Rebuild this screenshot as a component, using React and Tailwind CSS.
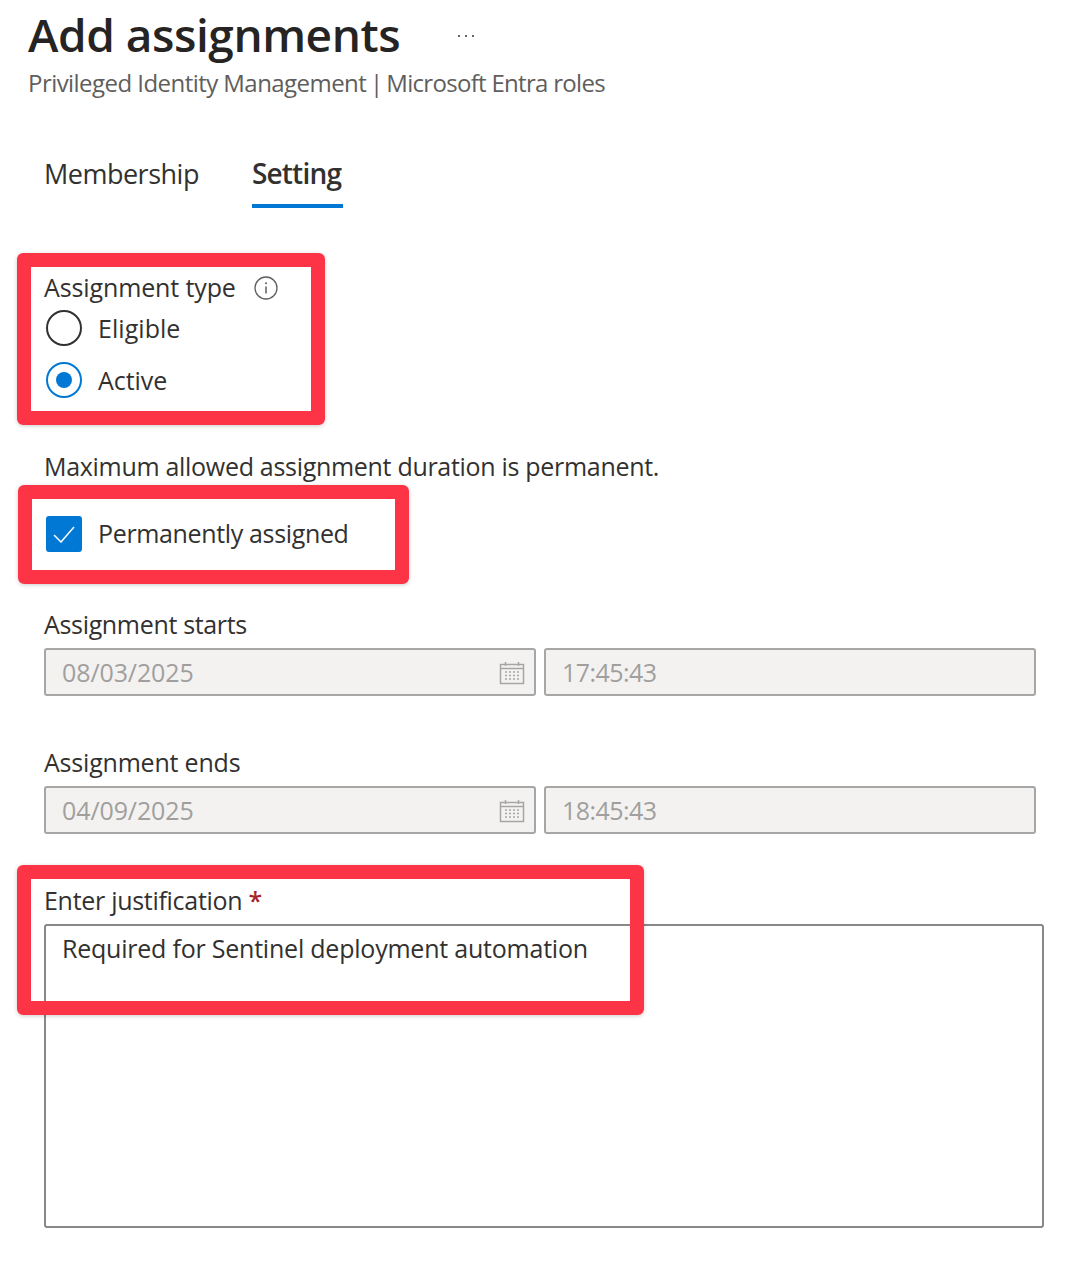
const font = "font-['Open_Sans',sans-serif]";

function CalendarIcon() {
  return (
    <svg width="26" height="24" viewBox="0 0 26 24" fill="none" stroke="#a6a6a6" strokeWidth="1.5">
      <rect x="1.5" y="3.5" width="23" height="19" />
      <path d="M1.5 7.5h23M6.5 1v4M19.5 1v4" />
      <path d="M6 11h14M6 14.5h14M6 18h14" strokeDasharray="2 2" />
    </svg>
  );
}

function DisabledField({ value, icon, className }) {
  return (
    <div className={`flex h-[48px] items-center justify-between rounded-[3px] border-2 border-[#a6a6a6] bg-[#f3f2f1] pl-[16px] pr-[9px] pt-[2px] text-[25px] text-[#a19f9d] ${className}`}>
      <span>{value}</span>
      {icon && <CalendarIcon />}
    </div>
  );
}

function DateRow({ label, date, time, className, labelClass }) {
  return (
    <div className={className}>
      <div className={`h-[41px] text-[25px] leading-[34px] text-[#323130] ${labelClass}`}>{label}</div>
      <div className="flex gap-[8px]">
        <DisabledField value={date} icon className="w-[492px] tracking-[-0.1px]" />
        <DisabledField value={time} className="w-[492px] tracking-[-0.55px]" />
      </div>
    </div>
  );
}

function Highlight({ className }) {
  return (
    <div className={`absolute rounded-[6px] border-[14px] border-[#fd3446] shadow-[0_1px_4px_rgba(0,0,0,0.2)] ${className}`} />
  );
}

export default function App() {
  return (
    <div className={`relative h-[1274px] w-[1082px] overflow-hidden bg-white ${font}`}>
      <div className="pl-[28px] pt-[5px]">
        <div className="flex items-center">
          <h1 className="text-[46px] font-semibold leading-[58px] tracking-[-0.45px] text-[#252423]">Add assignments</h1>
          <span className="ml-[58px] flex gap-[5px] pt-[3px]">
            <i className="h-[2px] w-[2px] rounded-full bg-[#323130]" />
            <i className="h-[2px] w-[2px] rounded-full bg-[#323130]" />
            <i className="h-[2px] w-[2px] rounded-full bg-[#323130]" />
          </span>
        </div>
        <p className="mt-[3px] text-[24px] leading-[34px] tracking-[-0.55px] text-[#605e5c]">
          Privileged Identity Management <span className="-mx-[2px]">|</span>{" "}
          <span className="tracking-[-0.7px]">Microsoft Entra roles</span>
        </p>
      </div>

      <div className="pl-[44px] pr-[38px]">
        <div className="mt-[40px] flex gap-[53px] text-[#323130]">
          <div className="h-[68px] text-[27px] leading-[68px] tracking-[-0.5px]">Membership</div>
          <div className="h-[68px] w-[91px] border-b-[4px] border-[#0078d4] text-[28px] font-semibold leading-[66px] tracking-[-0.8px]">Setting</div>
        </div>

        <div className="mt-[62px] flex items-center text-[25px] leading-[34px] tracking-[-0.12px] text-[#323130]">
          Assignment type
          <svg className="ml-[18px] mt-[2px]" width="24" height="24" viewBox="0 0 24 24" fill="none">
            <circle cx="12" cy="12" r="11" stroke="#605e5c" strokeWidth="1.3" />
            <path d="M12 10.5v7" stroke="#605e5c" strokeWidth="1.5" />
            <circle cx="12" cy="7.3" r="1" fill="#605e5c" />
          </svg>
        </div>

        <div className="-mt-[2px] flex h-[52px] items-center pl-[2px] text-[25px] tracking-[0.05px] text-[#323130]">
          <span className="h-[36px] w-[36px] rounded-full border-2 border-[#323130]" />
          <span className="ml-[16px] pt-[2px]">Eligible</span>
        </div>
        <div className="flex h-[52px] items-center pl-[2px] text-[25px] tracking-[-0.05px] text-[#323130]">
          <span className="flex h-[36px] w-[36px] items-center justify-center rounded-full border-2 border-[#0078d4]">
            <span className="h-[16px] w-[16px] rounded-full bg-[#0078d4]" />
          </span>
          <span className="ml-[16px] pt-[2px]">Active</span>
        </div>

        <p className="mt-[43px] text-[25px] leading-[34px] tracking-[-0.3px] text-[#323130]">Maximum allowed assignment duration is permanent.</p>

        <div className="mt-[32px] flex items-center pl-[2px] text-[25px] tracking-[-0.35px] text-[#323130]">
          <span className="flex h-[36px] w-[36px] items-center justify-center rounded-[3px] bg-[#0078d4]">
            <svg width="22" height="17" viewBox="0 0 22 17" fill="none" stroke="white" strokeWidth="1.5">
              <path d="M1 9l7 7L21 1" />
            </svg>
          </span>
          <span className="ml-[16px] pb-[2px] leading-[36px]">Permanently assigned</span>
        </div>

        <DateRow className="mt-[54px]" labelClass="tracking-[-0.33px]" label="Assignment starts" date="08/03/2025" time="17:45:43" />
        <DateRow className="mt-[49px]" labelClass="tracking-[-0.2px]" label="Assignment ends" date="04/09/2025" time="18:45:43" />

        <div className="mt-[49px] h-[34px] text-[25px] leading-[34px] tracking-[-0.29px] text-[#323130]">
          Enter justification <span className="font-semibold text-[#a4262c]">*</span>
        </div>
        <div className="mt-[7px] h-[304px] w-[1000px] rounded-[3px] border-2 border-[#8a8886] px-[16px] py-[5px] text-[25px] leading-[34px] tracking-[-0.22px] text-[#323130]">
          Required for Sentinel deployment automation
        </div>
      </div>

      <Highlight className="left-[17px] top-[253px] h-[172px] w-[308px]" />
      <Highlight className="left-[18px] top-[485px] h-[99px] w-[391px]" />
      <Highlight className="left-[17px] top-[865px] h-[150px] w-[627px]" />
    </div>
  );
}
